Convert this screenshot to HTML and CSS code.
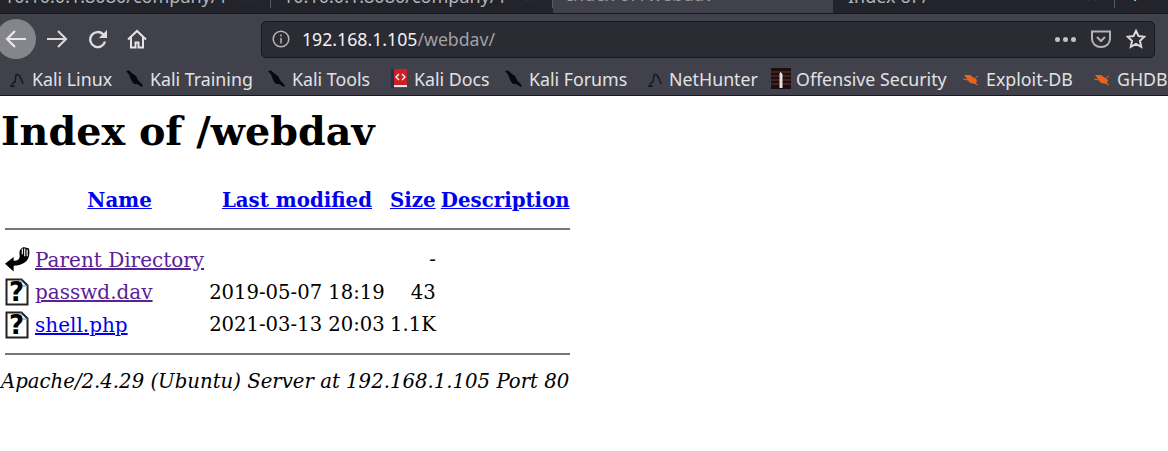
FILE: index.html
```html
<!DOCTYPE html>
<html lang="en">
<head>
<meta charset="utf-8">
<title>Index of /webdav</title>
<link rel="stylesheet" href="styles.css">
</head>
<body>
<div class="browser">
	<div class="tabs">
		<div class="tab tab_first"><span>10.10.0.1:8080/company/1</span><span class="close">×</span></div>
		<div class="tab tab_second"><span>10.10.0.1:8080/company/1</span><span class="close">×</span></div>
		<div class="tab tab_active"><span>Index of /webdav</span><span class="close">×</span></div>
		<div class="tab tab_last"><span>Index of /</span><span class="close">×</span></div>
		<div class="tab_new">+</div>
	</div>
	<div class="toolbar">
		<div class="back">
			<svg width="22" height="20" viewBox="0 0 22 20" fill="none" stroke="#e8e8ea" stroke-width="2.200"><path d="M21 10H2M10 2l-8 8 8 8"/></svg>
		</div>
		<svg class="tool forward" width="21" height="20" viewBox="0 0 21 20" fill="none" stroke="#d8d8da" stroke-width="2.200"><path d="M0 10h19M11 2l8 8-8 8"/></svg>
		<svg class="tool reload" width="20" height="20" viewBox="0 0 20 20" fill="none" stroke="#dcdcde" stroke-width="2.400"><path d="M17 12.500a7.500 7.500 0 1 1-2-7.300l2 2"/><path d="M19 1v8h-8z" fill="#dcdcde" stroke="none"/></svg>
		<svg class="tool home" width="20" height="20" viewBox="0 0 20 20" fill="none" stroke="#e4e4e6" stroke-width="2"><path d="M1 10.500 10 2l9 8.500M4 8.500V18.500h4.500v-5h3v5H16V8.500"/></svg>
		<div class="urlbar">
			<svg class="info" width="18" height="18" viewBox="0 0 18 18" fill="none" stroke="#b4b4b8" stroke-width="1.500"><circle cx="9" cy="9" r="7.800"/><path d="M9 8v5.500M9 4.500v2"/></svg>
			<span class="host">192.168.1.105</span><span class="path">/webdav/</span>
			<span class="spacer"></span>
			<span class="dots"><i></i><i></i><i></i></span>
			<svg class="pocket" width="20" height="18" viewBox="0 0 20 18" fill="none" stroke="#b4b4b8" stroke-width="2"><path d="M1 1.500h18V9A9 8 0 0 1 1 9z"/><path d="m6 7 4 4 4-4"/></svg>
			<svg class="star" width="20" height="20" viewBox="0 0 20 20" fill="none" stroke="#d8d8da" stroke-width="2"><path d="m10 1.800 2.500 5.300 5.800.7-4.300 4 1.200 6-5.200-3-5.200 3 1.200-6-4.300-4 5.800-.7z"/></svg>
		</div>
	</div>
	<div class="bookmarks">
		<span class="bookmark"><svg class="fav" width="17" height="16" viewBox="0 0 17 16" fill="none" stroke="#17171c" stroke-width="1.500"><path d="M3 15c0-3 2-4 3-4l1-7c3-2 5 3 7 9M1 15.300h5"/></svg>Kali Linux</span>
		<span class="bookmark"><svg class="fav fav_wide" width="20" height="18" viewBox="0 0 20 18" fill="#09090d"><path d="M1 1l3-.5 4 3.500 3 2 2 4 5 5.500-1 1.500-5-3-3 0-2-2.500-1-2L4 4.500z"/></svg>Kali Training</span>
		<span class="bookmark"><svg class="fav fav_wide" width="20" height="18" viewBox="0 0 20 18" fill="#09090d"><path d="M1 1l3-.5 4 3.500 3 2 2 4 5 5.500-1 1.500-5-3-3 0-2-2.500-1-2L4 4.500z"/></svg>Kali Tools</span>
		<span class="bookmark"><svg class="fav" width="18" height="21" viewBox="0 0 18 21"><rect x="1" y="1" width="3" height="19" fill="#22305a"/><rect x="4" y="1" width="13" height="19" fill="#cf1f26"/><rect x="4" y="17" width="13" height="2" fill="#e4e4e4"/><path d="m9 6-3 3 3 3M12 6l3 3-3 3" fill="none" stroke="#fff" stroke-width="1.300"/></svg>Kali Docs</span>
		<span class="bookmark"><svg class="fav fav_wide" width="20" height="18" viewBox="0 0 20 18" fill="#09090d"><path d="M1 1l3-.5 4 3.500 3 2 2 4 5 5.500-1 1.500-5-3-3 0-2-2.500-1-2L4 4.500z"/></svg>Kali Forums</span>
		<span class="bookmark"><svg class="fav fav_thin" width="16" height="16" viewBox="0 0 16 16" fill="none" stroke="#17171c" stroke-width="1.400"><path d="M3 15c0-3 2-4 3-4l1-7c3-2 5 3 7 9M1 15.300h5"/></svg>NetHunter</span>
		<span class="bookmark"><svg class="fav fav_wide" width="20" height="21" viewBox="0 0 20 21"><rect width="20" height="21" fill="#1c0d0f"/><path d="M0 4h20M0 8h20M0 12h20M0 16h20" stroke="#6a3536"/><path d="M9 20V6q0-3 2 0v14" fill="#e8e0dc" stroke="#e8e0dc"/></svg>Offensive Security</span>
		<span class="bookmark"><svg class="fav" width="18" height="16" viewBox="0 0 18 16"><path d="M2 4l6 0 7 5-1 4-6-1z" fill="#e8641a"/><path d="M1 8l5 1M16 5l-4 3M16 14l-4-2" stroke="#e8641a"/></svg>Exploit-DB</span>
		<span class="bookmark"><svg class="fav" width="18" height="16" viewBox="0 0 18 16"><path d="M2 4l6 0 7 5-1 4-6-1z" fill="#e8641a"/><path d="M1 8l5 1M16 5l-4 3M16 14l-4-2" stroke="#e8641a"/></svg>GHDB</span>
	</div>
</div>
<div class="page">
	<h1>Index of /webdav</h1>
	<table>
		<tr>
			<th class="col_icon"></th>
			<th class="col_name"><a href="#n">Name</a></th>
			<th class="col_date"><a href="#m">Last modified</a></th>
			<th class="col_size"><a href="#s">Size</a></th>
			<th class="col_desc"><a href="#d">Description</a></th>
		</tr>
		<tr><th colspan="5" class="rule_cell"><hr></th></tr>
		<tr>
			<td class="col_icon">
				<svg width="25" height="27" viewBox="0 0 26 27"><path d="M0 18l9-7v4c5 0 7-2 6-8C15 3 18 0 21 1l4 1c1 6 0 12-5 15-3 2-7 3-11 3v6z" fill="#000"/><path d="M18 2v6M20.500 2v8M23 3v7" stroke="#fff" stroke-width="1.200"/></svg>
			</td>
			<td><a class="visited" href="#p">Parent Directory</a></td>
			<td></td>
			<td class="size">-</td>
			<td></td>
		</tr>
		<tr>
			<td class="col_icon">
				<svg width="24" height="28" viewBox="0 0 24 28"><path d="M1.500 1.500h15l6 6v19h-21z" fill="#fff" stroke="#222" stroke-width="2"/><path d="M16 1.500v6.500h6.500" fill="none" stroke="#888"/><text x="11.500" y="23" text-anchor="middle" class="qmark">?</text></svg>
			</td>
			<td><a class="visited" href="#f">passwd.dav</a></td>
			<td>2019-05-07 18:19</td>
			<td class="size">43</td>
			<td></td>
		</tr>
		<tr>
			<td class="col_icon">
				<svg width="24" height="28" viewBox="0 0 24 28"><path d="M1.500 1.500h15l6 6v19h-21z" fill="#fff" stroke="#222" stroke-width="2"/><path d="M16 1.500v6.500h6.500" fill="none" stroke="#888"/><text x="11.500" y="23" text-anchor="middle" class="qmark">?</text></svg>
			</td>
			<td><a href="#s">shell.php</a></td>
			<td>2021-03-13 20:03</td>
			<td class="size">1.1K</td>
			<td></td>
		</tr>
		<tr><th colspan="5" class="rule_cell rule_end"><hr></th></tr>
	</table>
	<address>Apache/2.4.29 (Ubuntu) Server at 192.168.1.105 Port 80</address>
</div>
</body>
</html>
```
FILE: styles.css
```css
html, body {
    margin: 0;
    height: 100%;
    overflow: hidden;
    background-color: #fff;
}

body {
    font-family: "DejaVu Serif", serif;
    font-size: 20px;
    color: #000;
}

.browser {
    background-color: #40414a;
    font-family: "Noto Sans", sans-serif;
    border-bottom: 1px solid #17171c;
}

.tabs {
    display: flex;
    height: 14px;
    overflow: hidden;
    box-sizing: border-box;
    border-bottom: 1px solid #17181d;
    background-color: #23242b;
    font-size: 18px;
    color: #b4b5ba;
}

.tab {
    display: flex;
    justify-content: space-between;
    flex: none;
    width: 282px;
    height: 22px;
    margin-top: -14px;
    padding: 0 17px 0 14px;
    line-height: 20px;
    white-space: nowrap;
    box-sizing: border-box;
    border-right: 1px solid #5a5b60;
}

.tab_first {
    width: 271px;
    padding-left: 4px;
}

.tab_second {
    padding-left: 12px;
}

.tab_active {
    width: 280px;
    height: 40px;
    border-right: 0;
    background-color: #40414a;
    color: #9a9ba0;
}

.tab_active span {
    margin-top: -2px;
}

.tab_last {
    padding-left: 15px;
}

.close {
    color: #85868b;
}

.tab_new {
    height: 20px;
    margin-top: -14px;
    padding-left: 15px;
    line-height: 20px;
    color: #e4e4e6;
}

.toolbar {
    display: flex;
    align-items: center;
    height: 46px;
    box-sizing: border-box;
    padding-top: 4px;
}

.back {
    display: flex;
    align-items: center;
    justify-content: center;
    flex: none;
    width: 40px;
    height: 40px;
    margin-left: -4px;
    border-radius: 50%;
    background-color: #85868b;
}

.tool {
    flex: none;
}

.forward {
    margin-left: 11px;
}

.reload {
    margin-left: 20px;
}

.home {
    margin-left: 19px;
}

.urlbar {
    display: flex;
    align-items: center;
    flex: none;
    width: 894px;
    height: 37px;
    margin-left: 114px;
    box-sizing: border-box;
    padding: 0 8px 0 10px;
    border: 1px solid #17171c;
    border-radius: 5px;
    background-color: #2a2b33;
    font-size: 17.700px;
}

.info {
    margin-right: 12px;
}

.host {
    color: #f2f2f3;
}

.path {
    color: #a0a1a6;
}

.spacer {
    flex: 1;
}

.dots {
    display: flex;
    gap: 3px;
    margin-right: 15px;
}

.dots i {
    width: 5px;
    height: 5px;
    border-radius: 50%;
    background-color: #c4c4c8;
}

.pocket {
    margin-right: 15px;
}

.bookmarks {
    display: grid;
    grid-template-columns: 116px 142px 123px 114px 143px 124px 191px 131px 80px;
    align-items: center;
    height: 35px;
    padding: 2px 0 0 9px;
    box-sizing: border-box;
    font-size: 17.800px;
    color: #e2e2e4;
    white-space: nowrap;
    overflow: hidden;
}

.bookmark {
    display: flex;
    align-items: center;
}

.fav {
    flex: none;
    margin-right: 6px;
}

.fav_wide {
    margin-right: 5px;
}

.page {
    padding: 0 1px;
}

h1 {
    margin: 13px 0 32px;
    font-size: 39.700px;
    line-height: 44px;
}

table {
    border-spacing: 3px;
    font-size: 19.600px;
    white-space: nowrap;
}

th {
    padding: 0 1px;
    font-size: 19.800px;
}

td {
    padding: 0 1px;
    height: 29.500px;
}

td a {
    font-size: 20px;
}

a {
    color: #0000ee;
}

a.visited {
    color: #5b2196;
}

.col_icon {
    width: 25px;
    line-height: 0;
}

.col_name {
    width: 169px;
}

.col_date {
    width: 175px;
}

.col_size {
    width: 46px;
}

.col_desc {
    width: 128px;
}

.size {
    text-align: right;
}

.rule_cell {
    height: auto;
}

.rule_cell hr {
    margin: 13px 0 12px;
    border: 0;
    border-top: 2px solid #777;
}

.rule_end hr {
    margin-top: 10px;
    margin-bottom: 12px;
}

.qmark {
    font-family: "DejaVu Sans", sans-serif;
    font-size: 26px;
    font-weight: bold;
    fill: #000;
}

address {
    font-size: 19.700px;
}
```
